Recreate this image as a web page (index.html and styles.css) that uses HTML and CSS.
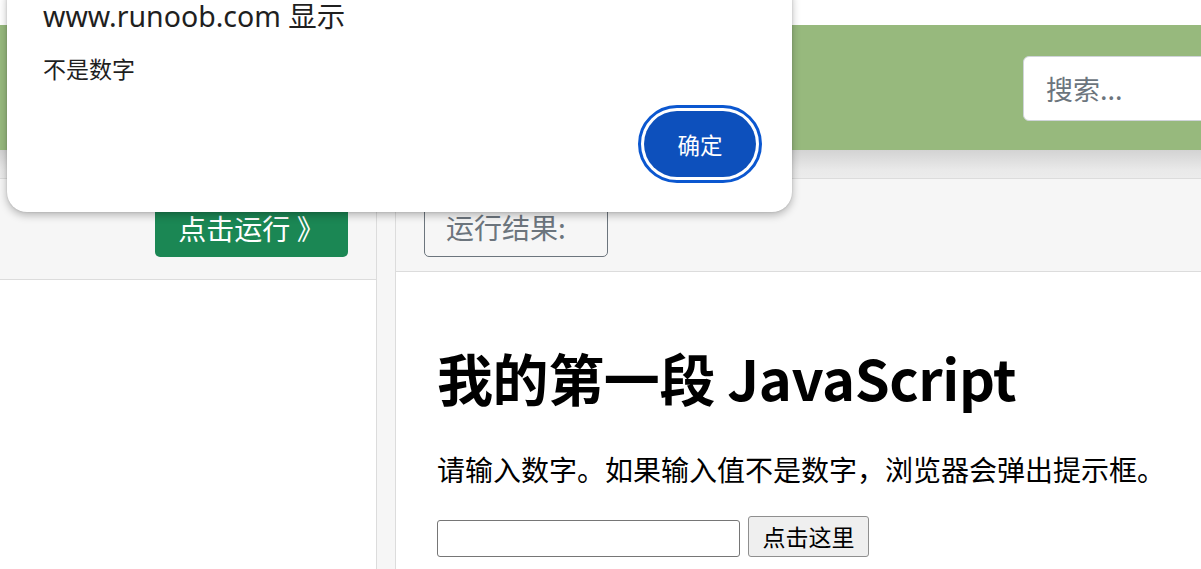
FILE: index.html
```html
<!DOCTYPE html>
<html lang="zh-CN">
<head>
<meta charset="utf-8">
<title>菜鸟教程在线编辑器</title>
<link rel="stylesheet" href="styles.css">
</head>
<body>
<div class="topbar"></div>
<header class="header">
  <input class="search" type="text" placeholder="搜索...">
</header>
<div class="header-shadow"></div>
<main class="workspace">
  <section class="panel panel-left">
    <div class="panel-head head-left">
      <button class="run-btn">点击运行 》</button>
    </div>
    <div class="panel-body"></div>
  </section>
  <section class="panel panel-right">
    <div class="panel-head head-right">
      <div class="result-label">运行结果:</div>
    </div>
    <div class="panel-body result">
      <h1 class="result-title">我的第一段 JavaScript</h1>
      <p class="result-text">请输入数字。如果输入值不是数字，浏览器会弹出提示框。</p>
      <div class="result-form">
        <input class="num-input" type="text">
        <button class="click-btn">点击这里</button>
      </div>
    </div>
  </section>
</main>
<div class="dialog">
  <div class="dialog-title">www.runoob.com 显示</div>
  <div class="dialog-msg">不是数字</div>
  <div class="dialog-actions">
    <button class="dialog-ok">确定</button>
  </div>
</div>
</body>
</html>
```
FILE: styles.css
```css
* { box-sizing: border-box; }
html, body { margin: 0; padding: 0; }
body {
  width: 1201px;
  height: 569px;
  overflow: hidden;
  background: #f6f6f6;
  font-family: "Noto Sans CJK SC", "Noto Sans", sans-serif;
  position: relative;
}
.topbar {
  height: 26px;
  background: #fff;
  border-bottom: 1px solid #d8d8d8;
}
.header {
  height: 125px;
  margin-top: -1px;
  background: #97b97d;
  display: flex;
  justify-content: flex-end;
  align-items: flex-start;
  padding-top: 31px;
}
.search {
  width: 200px;
  height: 65px;
  margin-right: -22px;
  border: 1px solid #cfd4d9;
  border-radius: 6px;
  background: #fff;
  padding: 0 22px;
  font-family: "Noto Sans CJK SC", sans-serif;
  font-size: 27px;
  color: #495057;
  outline: none;
}
.search::placeholder { color: #6c757d; }
.header-shadow {
  height: 29px;
  background: linear-gradient(#d3d3d3, #e9e9e9 70%, #ececec);
  border-bottom: 1px solid #dcdcdc;
}
.workspace {
  display: flex;
  gap: 18px;
  height: 400px;
}
.panel {
  display: flex;
  flex-direction: column;
  background: #fff;
}
.panel-left {
  width: 377px;
  border-right: 1px solid #dcdcdc;
}
.panel-right {
  flex: 1;
  border-left: 1px solid #dcdcdc;
}
.panel-head {
  background: #f6f6f6;
  border-bottom: 1px solid #dcdcdc;
  display: flex;
  align-items: flex-start;
}
.head-left {
  height: 101px;
  justify-content: flex-end;
  padding: 19px 28px 0 0;
}
.head-right {
  height: 93px;
  padding: 19px 0 0 28px;
}
.run-btn {
  width: 193px;
  height: 59px;
  border: none;
  border-radius: 5px;
  background: #1b8754;
  color: #fff;
  font-family: "Noto Sans CJK SC", sans-serif;
  font-size: 28px;
  padding: 0;
}
.result-label {
  width: 184px;
  height: 59px;
  border: 1px solid #6c757d;
  border-radius: 5px;
  color: #6c757d;
  font-size: 28px;
  line-height: 57px;
  padding-left: 21px;
}
.panel-body { flex: 1; background: #fff; }
.result {
  padding: 71px 0 0 41px;
  color: #000;
}
.result-title {
  margin: 0;
  font-size: 56px;
  line-height: 67px;
  font-weight: 700;
  letter-spacing: -0.4px;
}
.result-text {
  margin: 38px 0 0;
  font-size: 28px;
  line-height: 42px;
}
.result-form {
  margin-top: 26px;
  display: flex;
  align-items: flex-end;
  gap: 8px;
}
.num-input {
  width: 303px;
  height: 37px;
  border: 1px solid #767676;
  border-radius: 3px;
  background: #fff;
}
.click-btn {
  width: 121px;
  height: 41px;
  border: 1px solid #8f8f8f;
  border-radius: 3px;
  background: #efefef;
  font-family: "Noto Sans CJK SC", sans-serif;
  font-size: 23px;
  line-height: 39px;
  padding: 0;
  color: #000;
}
.dialog {
  position: absolute;
  left: 7px;
  top: -20px;
  width: 785px;
  height: 232px;
  background: #fff;
  border-radius: 20px;
  box-shadow: 0 3px 8px rgba(0,0,0,0.28), 0 0 2px rgba(0,0,0,0.15);
  padding: 19px 36px 0 36px;
  font-family: "Noto Sans", "Noto Sans CJK SC", sans-serif;
  color: #1f1f1f;
}
.dialog-title {
  font-size: 28.5px;
  line-height: 34px;
}
.dialog-msg {
  margin-top: 20px;
  font-size: 23px;
  line-height: 30px;
  font-family: "Noto Sans CJK SC", sans-serif;
}
.dialog-actions {
  display: flex;
  justify-content: flex-end;
  margin-top: 28px;
}
.dialog-ok {
  width: 112px;
  height: 66px;
  border: none;
  border-radius: 33px;
  background: #0d50bc;
  color: #fff;
  font-family: "Noto Sans CJK SC", sans-serif;
  font-size: 22.5px;
  padding: 0;
  outline: 3px solid #0b57d0;
  outline-offset: 3px;
}
```
